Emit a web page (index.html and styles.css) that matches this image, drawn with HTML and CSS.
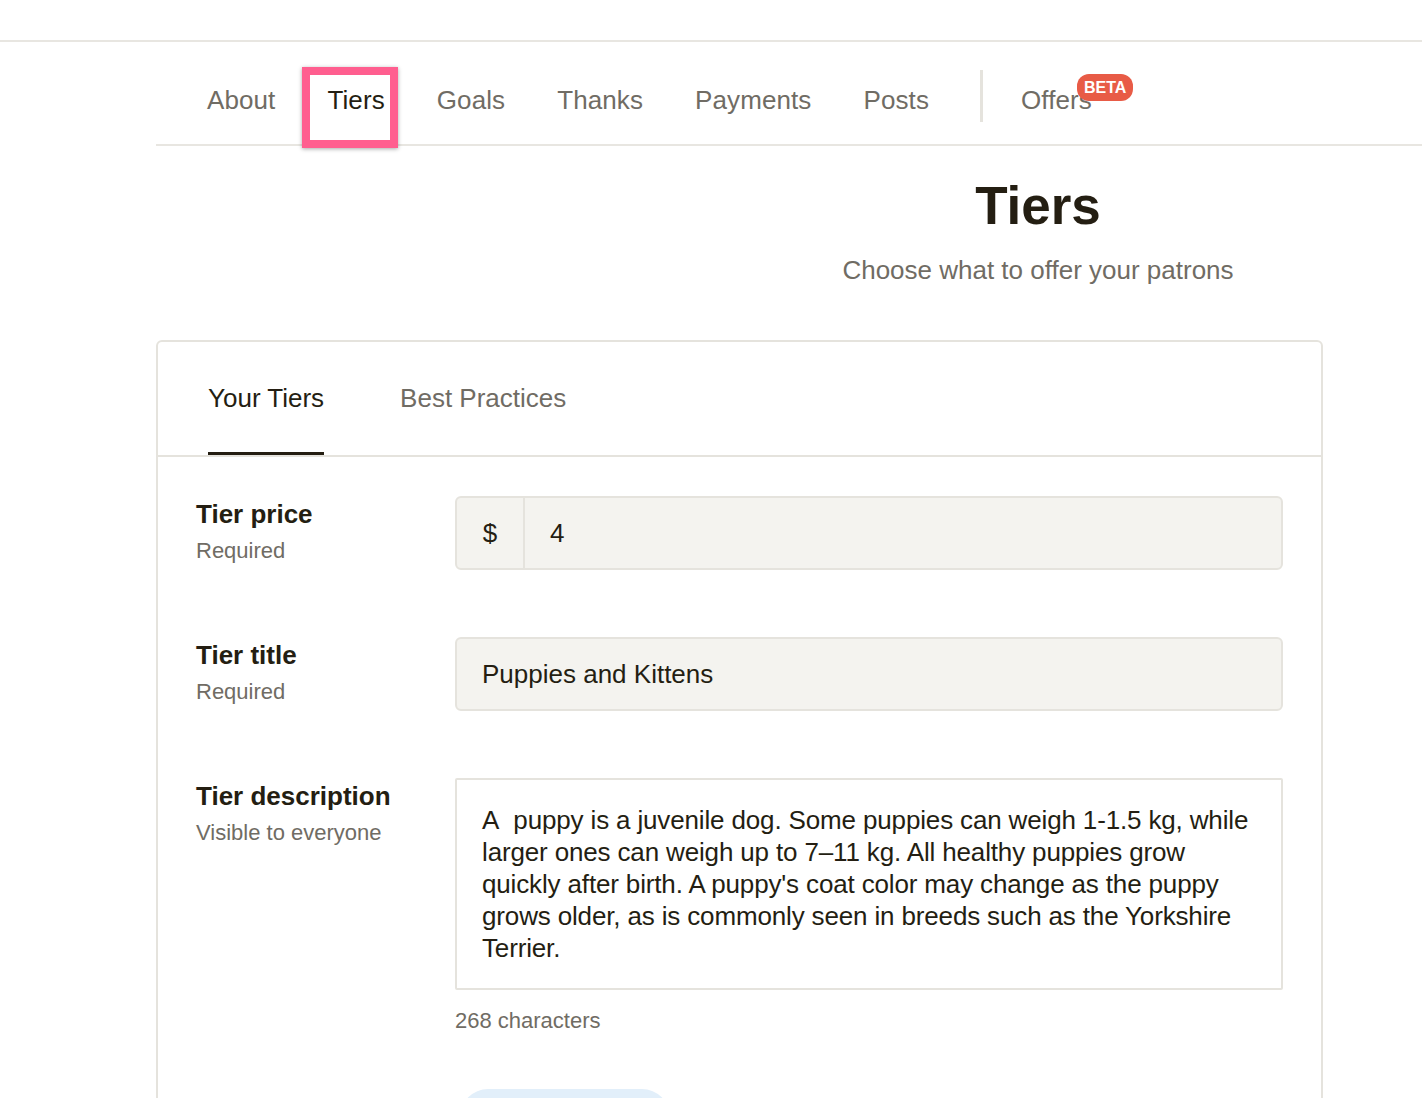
FILE: index.html
```html
<!DOCTYPE html>
<html lang="en">
<head>
<meta charset="utf-8">
<title>Tiers</title>
<link rel="stylesheet" href="styles.css">
</head>
<body>
<div class="topbar"></div>
<div class="content">
  <nav class="nav">
    <a class="nav-item">About</a>
    <a class="nav-item active">Tiers<span class="highlight"></span></a>
    <a class="nav-item">Goals</a>
    <a class="nav-item">Thanks</a>
    <a class="nav-item">Payments</a>
    <a class="nav-item">Posts</a>
    <span class="nav-divider"></span>
    <a class="nav-item">Offers<span class="beta">BETA</span></a>
  </nav>

  <header class="page-header">
    <h1 class="page-title">Tiers</h1>
    <p class="page-subtitle">Choose what to offer your patrons</p>
  </header>

  <section class="card">
    <div class="tabs">
      <a class="tab active">Your Tiers</a>
      <a class="tab">Best Practices</a>
    </div>
    <div class="form">
      <div class="row">
        <div class="label">
          <div class="label-title">Tier price</div>
          <div class="label-sub">Required</div>
        </div>
        <div class="field">
          <div class="input input-price">
            <span class="prefix">$</span>
            <span class="value">4</span>
          </div>
        </div>
      </div>
      <div class="row">
        <div class="label">
          <div class="label-title">Tier title</div>
          <div class="label-sub">Required</div>
        </div>
        <div class="field">
          <div class="input"><span class="value">Puppies and Kittens</span></div>
        </div>
      </div>
      <div class="row">
        <div class="label">
          <div class="label-title">Tier description</div>
          <div class="label-sub">Visible to everyone</div>
        </div>
        <div class="field">
          <div class="textarea">A&nbsp; puppy is a juvenile dog. Some puppies can weigh 1-1.5 kg, while larger ones can weigh up to 7–11 kg. All healthy puppies grow quickly after birth. A puppy's coat color may change as the puppy grows older, as is commonly seen in breeds such as the Yorkshire Terrier.</div>
          <div class="counter">268 characters</div>
          <div class="button"></div>
        </div>
      </div>
    </div>
  </section>
</div>
</body>
</html>
```

FILE: styles.css
```css
html, body {
  margin: 0;
  padding: 0;
  overflow: hidden;
  background: #ffffff;
}

body {
  font-family: "Liberation Sans", Arial, sans-serif;
  color: #241e12;
  width: 1422px;
  height: 1098px;
}

.topbar {
  height: 40px;
  border-bottom: 2px solid #e8e6e1;
}

.content {
  margin-left: 156px;
  width: 1764px;
}

/* ---------- top navigation ---------- */
.nav {
  display: flex;
  align-items: flex-start;
  padding-left: 25px;
  border-bottom: 2px solid #e8e6e1;
}

.nav-item {
  position: relative;
  display: block;
  padding: 43px 26px 29px;
  font-size: 26px;
  line-height: 30px;
  letter-spacing: 0.1px;
  color: #706c64;
  white-space: nowrap;
}

.nav-item.active {
  color: #241e12;
}

.highlight {
  position: absolute;
  left: 1px;
  top: 25px;
  width: 80px;
  height: 65px;
  border: 8px solid #ff5e8f;
  box-shadow: 0 1px 4px rgba(0, 0, 0, 0.35);
}

.nav-divider {
  width: 3px;
  height: 52px;
  margin: 28px 12px 0 25px;
  background: #e5e3dd;
}

.beta {
  position: absolute;
  left: 82px;
  top: 32px;
  height: 27px;
  padding: 0 7px;
  border-radius: 12px;
  background: #e85b46;
  color: #ffffff;
  font-size: 16px;
  font-weight: 700;
  line-height: 27px;
  letter-spacing: 0;
}

/* ---------- page header ---------- */
.page-header {
  text-align: center;
  padding-top: 28px;
}

.page-title {
  margin: 0;
  font-size: 53px;
  line-height: 64px;
  font-weight: 700;
  color: #241e12;
}

.page-subtitle {
  margin: 16px 0 0;
  font-size: 26px;
  line-height: 32px;
  color: #706c64;
}

/* ---------- card ---------- */
.card {
  margin-top: 54px;
  width: 1163px;
  height: 800px;
  border: 2px solid #e5e3dd;
  border-radius: 6px;
}

.tabs {
  display: flex;
  gap: 76px;
  padding-left: 50px;
  border-bottom: 2px solid #e5e3dd;
}

.tab {
  display: block;
  padding: 41px 0 39px;
  font-size: 26px;
  line-height: 30px;
  color: #706c64;
  border-bottom: 3px solid transparent;
}

.tab.active {
  color: #241e12;
  border-bottom-color: #241e12;
}

.form {
  padding: 39px 38px 0;
}

.row {
  display: flex;
  align-items: flex-start;
  margin-bottom: 67px;
}

.label {
  width: 259px;
  flex: none;
  padding-top: 2px;
}

.label-title {
  font-size: 26px;
  line-height: 32px;
  font-weight: 700;
  color: #241e12;
}

.label-sub {
  margin-top: 7px;
  font-size: 22px;
  line-height: 28px;
  color: #706c64;
}

.field {
  flex: 1;
}

.input {
  display: flex;
  align-items: center;
  height: 70px;
  border: 2px solid #e5e3dd;
  border-radius: 6px;
  background: #f4f3ef;
  font-size: 26px;
  line-height: 30px;
  color: #241e12;
}

.input .value {
  padding-left: 25px;
}

.prefix {
  display: flex;
  align-items: center;
  justify-content: center;
  width: 66px;
  height: 100%;
  border-right: 2px solid #e5e3dd;
}

.textarea {
  padding: 24px 25px;
  border: 2px solid #e5e3dd;
  border-radius: 2px;
  background: #ffffff;
  font-size: 26px;
  line-height: 32px;
  letter-spacing: -0.15px;
  color: #241e12;
}

.counter {
  margin-top: 17px;
  font-size: 22px;
  line-height: 28px;
  color: #706c64;
}

.button {
  margin-top: 54px;
  margin-left: 5px;
  width: 210px;
  height: 56px;
  border-radius: 28px;
  background: #e2effa;
}
```
